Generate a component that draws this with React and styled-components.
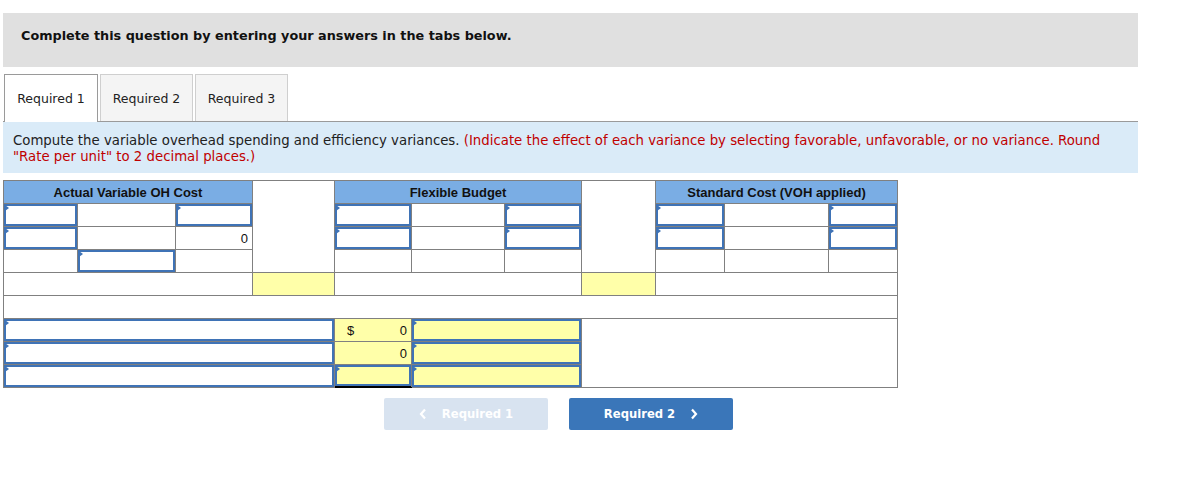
import React from "react";
import styled, { createGlobalStyle } from "styled-components";

const GlobalStyle = createGlobalStyle`
  body {
    margin: 0;
    background: #ffffff;
    font-family: "DejaVu Sans", Verdana, sans-serif;
  }
`;

// column widths, left to right, taken from the grid lines
const COLS = [74, 98, 77, 82, 77, 93, 77, 74, 69, 104, 69];

const Chevron = ({ dir }) => (
  <svg width="8" height="12" viewBox="0 0 8 12">
    <polyline
      points={dir === "left" ? "6,1.5 2,6 6,10.5" : "2,1.5 6,6 2,10.5"}
      fill="none"
      stroke="#ffffff"
      strokeWidth="2.2"
    />
  </svg>
);

const App = () => {
  return (
    <Page>
      <GlobalStyle />
      <Banner>Complete this question by entering your answers in the tabs below.</Banner>

      <TabBar>
        <Tab active>Required 1</Tab>
        <Tab>Required 2</Tab>
        <Tab>Required 3</Tab>
      </TabBar>

      <Instructions>
        Compute the variable overhead spending and efficiency variances.{" "}
        <Red>
          (Indicate the effect of each variance by selecting favorable, unfavorable, or no
          variance. Round "Rate per unit" to 2 decimal places.)
        </Red>
      </Instructions>

      <Grid>
        <colgroup>
          {COLS.map((w, i) => (
            <col key={i} style={{ width: w }} />
          ))}
        </colgroup>
        <tbody>
          <tr>
            <Head colSpan={3}>Actual Variable OH Cost</Head>
            <Cell rowSpan={4} />
            <Head colSpan={3}>Flexible Budget</Head>
            <Cell rowSpan={4} />
            <Head colSpan={3}>Standard Cost (VOH applied)</Head>
          </tr>
          <tr>
            <InCell><Input /></InCell>
            <Cell />
            <InCell><Input /></InCell>
            <InCell><Input /></InCell>
            <Cell />
            <InCell><Input /></InCell>
            <InCell><Input /></InCell>
            <Cell />
            <InCell><Input /></InCell>
          </tr>
          <tr>
            <InCell><Input /></InCell>
            <Cell />
            <Cell align="right">0</Cell>
            <InCell><Input /></InCell>
            <Cell />
            <InCell><Input /></InCell>
            <InCell><Input /></InCell>
            <Cell />
            <InCell><Input /></InCell>
          </tr>
          <tr>
            <Cell />
            <InCell topRule><Input /></InCell>
            <Cell />
            <Cell />
            <Cell />
            <Cell />
            <Cell />
            <Cell />
            <Cell />
          </tr>
          <tr>
            <Cell colSpan={3} />
            <Cell yellow />
            <Cell colSpan={3} />
            <Cell yellow />
            <Cell colSpan={3} />
          </tr>
          <tr>
            <Cell colSpan={11} />
          </tr>
          <tr>
            <InCell colSpan={4}><Input /></InCell>
            <Cell yellow align="right">
              <Amount>
                <span>$</span>
                <span>0</span>
              </Amount>
            </Cell>
            <InCell yellow colSpan={2}><Input yellow /></InCell>
            <Cell colSpan={4} rowSpan={3} />
          </tr>
          <tr>
            <InCell colSpan={4}><Input /></InCell>
            <Cell yellow align="right">0</Cell>
            <InCell yellow colSpan={2}><Input yellow /></InCell>
          </tr>
          <tr>
            <InCell colSpan={4}><Input /></InCell>
            <InCell yellow topRule doubleBottom><Input yellow total /></InCell>
            <InCell yellow colSpan={2}><Input yellow /></InCell>
          </tr>
        </tbody>
      </Grid>

      <Nav>
        <NavButton disabled>
          <Chevron dir="left" />
          Required 1
        </NavButton>
        <NavButton>
          Required 2
          <Chevron dir="right" />
        </NavButton>
      </Nav>
    </Page>
  );
};

const Page = styled.div`
  width: 1135px;
  padding: 13px 0 0 3px;
`;

const Banner = styled.div`
  height: 54px;
  box-sizing: border-box;
  padding: 15px 0 0 18px;
  background: #e0e0e0;
  font-size: 12.8px;
  font-weight: bold;
  color: #111111;
`;

const TabBar = styled.div`
  display: flex;
  gap: 2px;
  margin-top: 7px;
  padding-left: 1px;
  border-bottom: 1px solid #9a9a9a;
  height: 47px;
`;

const Tab = styled.div`
  width: ${(p) => (p.active ? 94 : 93)}px;
  height: ${(p) => (p.active ? 48 : 47)}px;
  box-sizing: border-box;
  display: flex;
  align-items: center;
  justify-content: center;
  font-size: 12.5px;
  color: #222222;
  background: ${(p) => (p.active ? "#ffffff" : "#f4f4f4")};
  border: 1px solid ${(p) => (p.active ? "#9a9a9a" : "#cfcfcf")};
  border-bottom: none;
`;

const Instructions = styled.div`
  background: #daebf8;
  height: 51px;
  box-sizing: border-box;
  padding: 11px 10px 0 10px;
  font-size: 13.3px;
  line-height: 16px;
  color: #222222;
`;

const Red = styled.span`
  color: #c00000;
`;

const Grid = styled.table`
  margin-top: 7px;
  border-collapse: collapse;
  table-layout: fixed;
  width: 895px;
  font-family: "Liberation Sans", Arial, sans-serif;
  font-size: 13px;
  color: #111111;
`;

const Cell = styled.td`
  height: 22px;
  padding: 0 4px;
  border: 1px solid #808080;
  text-align: ${(p) => p.align || "left"};
  background: ${(p) => (p.yellow ? "#ffffa9" : "#ffffff")};
  vertical-align: middle;
`;

const InCell = styled.td`
  height: 22px;
  padding: 0;
  border: 1px solid #808080;
  vertical-align: top;
  background: ${(p) => (p.yellow ? "#ffffa9" : "#ffffff")};
  ${(p) => p.topRule && "border-top-color: #000000;"}
  ${(p) => p.doubleBottom && "border-bottom-color: #000000;"}
`;

const Input = styled.div`
  position: relative;
  height: ${(p) => (p.total ? 21 : 22)}px;
  box-sizing: border-box;
  border: 2px solid #3f73b6;
  background: ${(p) => (p.yellow ? "#ffffa9" : "#ffffff")};

  &::before {
    content: "";
    position: absolute;
    left: -1px;
    top: -1px;
    border-top: 3px solid transparent;
    border-bottom: 3px solid transparent;
    border-left: 4px solid #3f73b6;
  }

  ${(p) =>
    p.total &&
    `&::after {
      content: "";
      position: absolute;
      left: -2px;
      right: -2px;
      bottom: -3px;
      height: 1px;
      background: #000000;
    }`}
`;

const Head = styled.td`
  height: 22px;
  padding: 0;
  border: 1px solid #808080;
  background: #7aade4;
  text-align: center;
  font-weight: bold;
  color: #111111;
`;

const Amount = styled.div`
  display: flex;
  justify-content: space-between;
  padding-left: 8px;
`;

const Nav = styled.div`
  display: flex;
  gap: 21px;
  margin-top: 10px;
  padding-left: 381px;
`;

const NavButton = styled.div`
  width: 164px;
  height: 32px;
  display: flex;
  align-items: center;
  justify-content: center;
  gap: 15px;
  border-radius: 2px;
  background: ${(p) => (p.disabled ? "#d8e3f0" : "#3a76b9")};
  color: #ffffff;
  font-size: 11.6px;
  font-weight: bold;
`;

export default App;
